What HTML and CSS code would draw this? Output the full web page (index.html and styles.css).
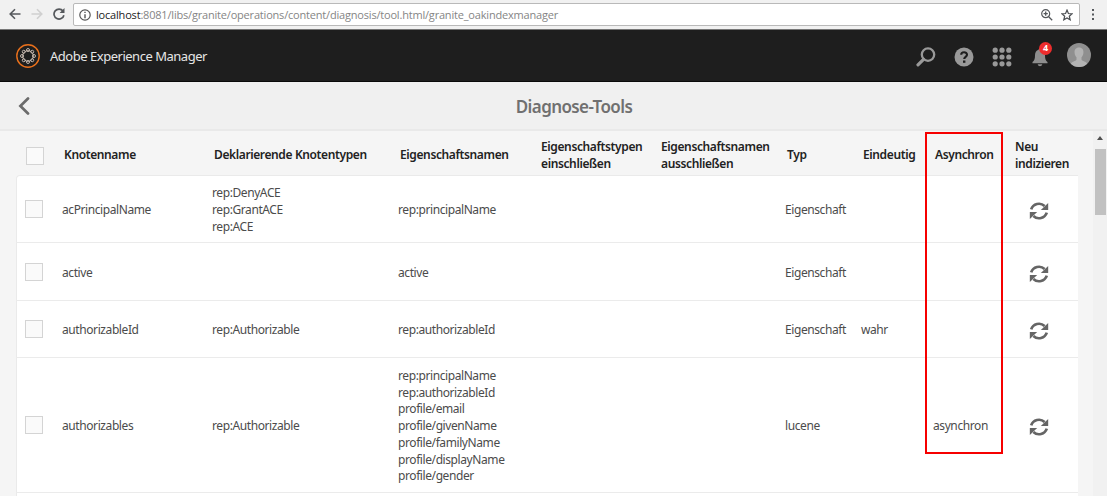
FILE: index.html
```html
<!DOCTYPE html>
<html lang="de">
<head>
<meta charset="utf-8">
<title>Diagnose-Tools</title>
<link rel="stylesheet" href="styles.css">
</head>
<body>
<svg width="0" height="0" class="defs">
  <symbol id="refresh" viewBox="0 0 20 20">
    <path d="M2.200 8.400A8.200 8.200 0 0 1 15.600 5" fill="none" stroke="#656565" stroke-width="2.7"/>
    <path d="M19.200 2v7h-7.400z" fill="#656565"/>
    <path d="M17.800 11.600A8.200 8.200 0 0 1 4.400 15" fill="none" stroke="#656565" stroke-width="2.7"/>
    <path d="M.8 18v-7h7.400z" fill="#656565"/>
  </symbol>
</svg>
<div class="browser">
  <div class="nav">
    <svg width="12" height="12" viewBox="0 0 12 12"><path d="M11.5 6H1.5M6 1.2L1.2 6L6 10.8" fill="none" stroke="#55585c" stroke-width="1.6"/></svg>
    <svg width="12" height="12" viewBox="0 0 12 12"><path d="M.5 6h10M6 1.2L10.8 6L6 10.8" fill="none" stroke="#d0d0d0" stroke-width="1.6"/></svg>
    <svg width="12" height="12" viewBox="0 0 12 12"><path d="M10 3A5 5 0 1 0 10.9 7.2" fill="none" stroke="#55585c" stroke-width="1.7"/><path d="M11.5 0v5H6.6z" fill="#55585c"/></svg>
  </div>
  <div class="address">
    <svg width="12" height="12" viewBox="0 0 12 12"><circle cx="6" cy="6" r="5.2" fill="none" stroke="#555" stroke-width="1.2"/><path d="M6 5.2v4M6 2.7v1.4" stroke="#555" stroke-width="1.4"/></svg>
    <span class="url"><b>localhost</b>:8081/libs/granite/operations/content/diagnosis/tool.html/granite_oakindexmanager</span>
    <svg width="12" height="12" viewBox="0 0 12 12"><circle cx="4.7" cy="4.7" r="4" fill="none" stroke="#55585c" stroke-width="1.2"/><path d="M7.7 7.7l3.5 3.5M2.6 4.7h4.2M4.7 2.6v4.2" stroke="#55585c" stroke-width="1.3"/></svg>
    <svg class="star" width="12" height="12" viewBox="0 0 12 12"><path d="M6 1.1l1.4 3.4 3.7.3-2.8 2.4.9 3.6L6 8.9l-3.2 1.9.9-3.6L.9 4.8l3.7-.3z" fill="none" stroke="#4b4e52" stroke-width="1.2"/></svg>
  </div>
  <svg class="dots" width="4" height="12" viewBox="0 0 4 12" fill="#55585c"><rect x="1" y="0" width="2" height="2"/><rect x="1" y="4.5" width="2" height="2"/><rect x="1" y="9" width="2" height="2"/></svg>
</div>
<header class="shell">
  <svg width="24" height="24" viewBox="0 0 24 24" fill="none">
    <circle cx="12" cy="12" r="11.2" stroke="#e8701c" stroke-width="1.4"/>
    <circle cx="12" cy="12" r="5.3" stroke="#b9aca3" stroke-width="1"/>
    <g stroke="#cfc2b8" stroke-width=".9">
      <circle cx="12" cy="6" r="1.5"/><circle cx="16.24" cy="7.76" r="1.5"/><circle cx="18" cy="12" r="1.5"/><circle cx="16.24" cy="16.24" r="1.5"/>
      <circle cx="12" cy="18" r="1.5"/><circle cx="7.76" cy="16.24" r="1.5"/><circle cx="6" cy="12" r="1.5"/><circle cx="7.76" cy="7.76" r="1.5"/>
    </g>
  </svg>
  <span class="brand">Adobe Experience Manager</span>
  <div class="actions">
    <svg width="20" height="20" viewBox="0 0 20 20" fill="none" stroke="#999"><circle cx="12" cy="7.6" r="6.2" stroke-width="2.3"/><path d="M7.5 12.3L2 17.8" stroke-width="3.2" stroke-linecap="round"/></svg>
    <svg width="20" height="20" viewBox="0 0 20 20"><circle cx="10" cy="10" r="9.5" fill="#999"/><path d="M7.200 7.800C7.200 4.400 13 4.500 13 7.700C13 9.800 10.200 9.800 10.200 12" fill="none" stroke="#1e1e1e" stroke-width="2.1"/><rect x="9" y="13.5" width="2.4" height="2.3" fill="#1e1e1e"/></svg>
    <svg width="20" height="20" viewBox="0 0 20 20" fill="#999"><circle cx="3.2" cy="3.2" r="2.6"/><circle cx="10" cy="3.2" r="2.6"/><circle cx="16.8" cy="3.2" r="2.6"/><circle cx="3.2" cy="10" r="2.6"/><circle cx="10" cy="10" r="2.6"/><circle cx="16.8" cy="10" r="2.6"/><circle cx="3.2" cy="16.8" r="2.6"/><circle cx="10" cy="16.8" r="2.6"/><circle cx="16.8" cy="16.8" r="2.6"/></svg>
    <div class="bell">
      <svg width="20" height="20" viewBox="0 0 20 20" fill="#8e8e8e"><path d="M10 1.500c.9 0 1.300.5 1.400 1.200 2.500.7 3.600 3 3.600 5.500 0 3.800.7 5.300 2.500 6.900v1.200H2.500v-1.200C4.300 13.500 5 12 5 8.200c0-2.500 1.100-4.800 3.600-5.500C8.700 2 9.100 1.500 10 1.500zM7.700 17.300h4.600c-.4 2.600-4.200 2.600-4.600 0z"/></svg>
      <span class="badge">4</span>
    </div>
    <svg class="avatar" width="24" height="24" viewBox="0 0 24 24"><defs><clipPath id="face"><circle cx="12" cy="12" r="12"/></clipPath></defs><circle cx="12" cy="12" r="12" fill="#8f8f8f"/><path clip-path="url(#face)" d="M12 4.600c3.300 0 4.700 2.300 4.400 5.300-.2 2-1 3.400-1.900 4.400v2.500c1 1.600 4.500 1.500 5.500 3.800V24H4v-3.400c1-2.300 4.500-2.200 5.500-3.800v-2.500c-.9-1-1.700-2.400-1.900-4.400C7.300 6.900 8.700 4.600 12 4.600z" fill="#b3b3b3"/></svg>
  </div>
</header>
<div class="titlebar">
  <svg width="12" height="18" viewBox="0 0 12 18"><path d="M10 1.500L2.400 9l7.600 7.500" fill="none" stroke="#6b6b6b" stroke-width="2.7" stroke-linecap="round"/></svg>
  <h1>Diagnose-Tools</h1>
</div>
<main class="content">
  <div class="table">
    <div class="row head">
      <i class="check"></i><span>Knotenname</span><span>Deklarierende Knotentypen</span><span>Eigenschaftsnamen</span><span>Eigenschaftstypen<br>einschließen</span><span>Eigenschaftsnamen<br>ausschließen</span><span>Typ</span><span>Eindeutig</span><span>Asynchron</span><span class="last">Neu<br>indizieren</span>
    </div>
    <div class="body">
      <div class="row r1">
        <i class="check"></i><span>acPrincipalName</span><span>rep:DenyACE<br>rep:GrantACE<br>rep:ACE</span><span>rep:principalName</span><span></span><span></span><span>Eigenschaft</span><span></span><span></span><svg class="re"><use href="#refresh"/></svg>
      </div>
      <div class="row r2">
        <i class="check"></i><span>active</span><span></span><span>active</span><span></span><span></span><span>Eigenschaft</span><span></span><span></span><svg class="re"><use href="#refresh"/></svg>
      </div>
      <div class="row r3">
        <i class="check"></i><span>authorizableId</span><span>rep:Authorizable</span><span>rep:authorizableId</span><span></span><span></span><span>Eigenschaft</span><span>wahr</span><span></span><svg class="re"><use href="#refresh"/></svg>
      </div>
      <div class="row r4">
        <i class="check"></i><span>authorizables</span><span>rep:Authorizable</span><span>rep:principalName<br>rep:authorizableId<br>profile/email<br>profile/givenName<br>profile/familyName<br>profile/displayName<br>profile/gender</span><span></span><span></span><span>lucene</span><span></span><span>asynchron</span><svg class="re"><use href="#refresh"/></svg>
      </div>
      <div class="row r5"></div>
    </div>
  </div>
  <div class="scroll"><i class="up"></i><i class="thumb"></i></div>
  <div class="highlight"></div>
</main>
</body>
</html>
```

FILE: styles.css
```css
* { box-sizing: border-box; }
body {
  margin: 0;
  width: 1107px;
  height: 496px;
  overflow: hidden;
  background: #f5f5f5;
  color: #4b4b4b;
  font-family: "Noto Sans", "Open Sans", sans-serif;
  font-size: 12px;
  line-height: 16.8px;
}
svg { display: block; flex: none; }
.defs { display: none; }

.browser {
  height: 30px;
  display: flex;
  align-items: flex-start;
  padding: 3px 12px 0 9px;
  background: #f1f1f1;
  border-bottom: 1px solid #777;
}
.nav { display: flex; gap: 10px; width: 64px; padding-top: 5px; }
.address {
  flex: 1;
  height: 23px;
  display: flex;
  align-items: center;
  padding: 0 6px 0 5px;
  margin-right: 12px;
  background: #fff;
  border: 1px solid #b9b9b9;
  border-radius: 2px;
}
.url {
  flex: 1;
  padding: 1px 0 0 5px;
  font-family: "Open Sans", sans-serif;
  font-size: 11px;
  letter-spacing: -0.19px;
  color: #858585;
  white-space: nowrap;
}
.url b { font-weight: 400; color: #222; }
.star { margin-left: 8px; }
.dots { margin: 6px 0 0 -1px; }

.shell {
  height: 52px;
  display: flex;
  align-items: center;
  padding: 0 16px;
  background: #1e1e1e;
  border-bottom: 1px solid #0a0a0a;
}
.brand { margin-left: 10px; padding-top: 1px; color: #e6e6e6; font-size: 13px; letter-spacing: -0.48px; }
.actions { display: flex; align-items: center; gap: 18px; margin-left: auto; padding-top: 3px; }
.avatar { margin: -5px 0 0 -1px; }
.bell { position: relative; }
.badge {
  position: absolute;
  left: 9px;
  top: -5px;
  width: 13px;
  height: 13px;
  border-radius: 50%;
  background: #ed2d2d;
  color: #fff;
  font-size: 9px;
  font-weight: 700;
  line-height: 12px;
  text-align: center;
}

.titlebar {
  height: 49px;
  display: flex;
  align-items: center;
  padding: 0 18px;
  background: #f0f0f0;
  border-bottom: 2px solid #e9e9e9;
}
h1 {
  flex: 1;
  margin: 0;
  padding: 3px 0 0 29px;
  text-align: center;
  color: #707070;
  font-size: 17px;
  font-weight: 600;
  line-height: 24px;
  letter-spacing: -0.6px;
}

.content { position: relative; display: flex; height: 365px; }
.table { width: 1062px; margin-left: 16px; }
.row {
  display: grid;
  grid-template-columns: 46px 150px 186px 141px 120px 126px 76px 72px 69px 75px;
  align-items: center;
  white-space: nowrap;
  letter-spacing: -0.41px;
}
.head {
  height: 44px;
  padding: 5px 0 0 2px;
  color: #222;
  font-weight: 600;
  letter-spacing: -0.38px;
}
.head .last { padding-left: 11px; }
.check { width: 18px; height: 18px; margin-left: 9px; background: #fafafa; border: 1px solid #d4d4d4; }
.head .check { margin-left: 8px; }
.body {
  background: #fff;
  border: 1px solid #eaeaea;
  border-right: 0;
  border-radius: 4px 0 0 0;
}
.body .row { border-bottom: 1px solid #ebebeb; padding-top: 3px; margin-left: -1px; }
.body .check { margin-top: -3px; }
.body .r1 { height: 67px; }
.body .r2 { height: 58px; }
.body .r3 { height: 57px; }
.body .r4 { height: 135px; }
.body .r5 { height: 4px; }
.re { width: 20px; height: 20px; margin: 1px 0 0 27px; }

.scroll {
  width: 14px;
  margin-left: auto;
  display: flex;
  flex-direction: column;
  align-items: center;
  background: #f1f1f1;
}
.up { margin-top: 5px; border: 3px solid transparent; border-top: 0; border-bottom: 4px solid #505050; }
.thumb { width: 11px; height: 66px; margin-top: 9px; background: #c1c1c1; }
.highlight {
  position: absolute;
  left: 925px;
  top: 1px;
  width: 78px;
  height: 322px;
  border: 2px solid #f60000;
}
```
